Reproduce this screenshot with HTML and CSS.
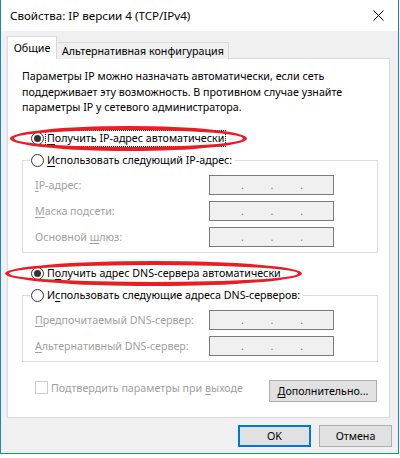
FILE: index.html
```html
<!DOCTYPE html>
<html>

<head>
    <title>Свойства: IP версии 4 (TCP/IPv4)</title>
    <link rel="stylesheet" href="styles.css">
</head>

<body>
    <div class="window">
        <div class="titlebar">
            <span class="title">Свойства: IP версии 4 (TCP/IPv4)</span>
            <svg class="close" width="11" height="11" viewBox="0 0 11 11">
                <path d="M0.5 0.5 L10.5 10.5 M10.5 0.5 L0.5 10.5" stroke="#000" stroke-width="1" fill="none" />
            </svg>
        </div>

        <div class="client">
            <div class="tabs">
                <div class="tab active">Общие</div>
                <div class="tab">Альтернативная конфигурация</div>
            </div>

            <div class="panel">
                <p class="intro">Параметры IP можно назначать автоматически, если сеть поддерживает эту возможность. В противном случае узнайте параметры IP у сетевого администратора.</p>

                <div class="radio-row">
                    <span class="radio checked"></span>
                    <span class="label focused"><u>П</u>олучить IP-адрес автоматически</span>
                </div>

                <fieldset class="group">
                    <legend class="radio-row">
                        <span class="radio"></span>
                        <span class="label"><u>И</u>спользовать следующий IP-адрес:</span>
                    </legend>
                    <div class="field">
                        <span class="field-label"><u>I</u>P-адрес:</span>
                        <span class="ip-box"><span>.</span><span>.</span><span>.</span></span>
                    </div>
                    <div class="field">
                        <span class="field-label"><u>М</u>аска подсети:</span>
                        <span class="ip-box"><span>.</span><span>.</span><span>.</span></span>
                    </div>
                    <div class="field">
                        <span class="field-label">Основной <u>ш</u>люз:</span>
                        <span class="ip-box"><span>.</span><span>.</span><span>.</span></span>
                    </div>
                </fieldset>

                <div class="radio-row dns-auto">
                    <span class="radio checked"></span>
                    <span class="label">П<u>о</u>лучить адрес DNS-сервера автоматически</span>
                </div>

                <fieldset class="group">
                    <legend class="radio-row">
                        <span class="radio"></span>
                        <span class="label">И<u>с</u>пользовать следующие адреса DNS-серверов:</span>
                    </legend>
                    <div class="field">
                        <span class="field-label"><u>П</u>редпочитаемый DNS-сервер:</span>
                        <span class="ip-box"><span>.</span><span>.</span><span>.</span></span>
                    </div>
                    <div class="field">
                        <span class="field-label"><u>А</u>льтернативный DNS-сервер:</span>
                        <span class="ip-box"><span>.</span><span>.</span><span>.</span></span>
                    </div>
                </fieldset>

                <div class="panel-footer">
                    <div class="check-row">
                        <span class="checkbox"></span>
                        <span class="check-label">Подтвердить параметры при <u>в</u>ыходе</span>
                    </div>
                    <button type="button" class="btn advanced"><u>Д</u>ополнительно...</button>
                </div>
            </div>

            <div class="dialog-buttons">
                <button type="button" class="btn default">OK</button>
                <button type="button" class="btn">Отмена</button>
            </div>
        </div>

        <!-- red marks drawn over the screenshot -->
        <div class="mark mark-ip"></div>
        <div class="mark mark-dns"></div>
    </div>
</body>

</html>
```

FILE: styles.css
```css
body {
    margin: 0;
    padding: 0;
    background-color: #ffffff;
    font-family: "Noto Sans", "Open Sans", sans-serif;
    font-size: 10.7px;
    color: #000000;
}

u {
    text-decoration-thickness: 1px;
    text-underline-offset: 2px;
}

.window {
    position: relative;
    width: 397px;
    height: 453px;
    border: 1px solid #1883d7;
    border-top: none;
    background-color: #f0f0f0;
}

.titlebar {
    height: 31px;
    background-color: #ffffff;
    display: flex;
    align-items: center;
    justify-content: space-between;
    padding: 0 9px 0 9px;
}

.title {
    font-size: 11.6px;
}

.close {
    margin-right: 5px;
}

.client {
    padding: 6px 6px 0 6px;
}

.tabs {
    display: flex;
    align-items: flex-end;
    height: 22px;
    margin-bottom: -1px;
    position: relative;
}

.tab {
    height: 16px;
    line-height: 16px;
    padding: 0 4px 0 5px;
    border: 1px solid #d9d9d9;
    border-bottom: none;
    border-left: none;
    background-color: #f0f0f0;
}

.tab.active {
    height: 22px;
    line-height: 22px;
    width: 48px;
    padding: 0;
    text-align: center;
    border-left: 1px solid #d9d9d9;
    background-color: #ffffff;
}

.panel {
    width: 356px;
    background-color: #ffffff;
    border: 1px solid #d9d9d9;
    padding: 0 11px 15px 14px;
}

.intro {
    margin: 10px 0 0 0;
    line-height: 15.5px;
    padding-right: 20px;
}

.radio-row {
    display: flex;
    align-items: center;
    height: 22px;
    padding-left: 9px;
}

.intro + .radio-row {
    margin-top: 12px;
}

.radio {
    width: 11px;
    height: 11px;
    border: 1px solid #333333;
    border-radius: 50%;
    background-color: #ffffff;
    display: flex;
    align-items: center;
    justify-content: center;
    flex-shrink: 0;
}

.radio.checked::after {
    content: "";
    width: 7px;
    height: 7px;
    border-radius: 50%;
    background-color: #333333;
}

.label {
    margin-left: 2px;
    padding: 0 1px;
    line-height: 15px;
}

.label.focused {
    outline: 1px dotted #000000;
    outline-offset: 0;
}

.group {
    margin: 0;
    padding: 0 0 5px 12px;
    border: 1px solid #dcdcdc;
}

.group legend {
    padding: 0 2px 0 1px;
    margin-left: -5px;
}

.field {
    display: flex;
    align-items: center;
    height: 20px;
    margin-top: 6px;
}

.group legend + .field {
    margin-top: 3px;
}

.field-label {
    width: 174px;
    color: #a0a0a0;
}

.ip-box {
    box-sizing: border-box;
    width: 125px;
    height: 20px;
    border: 1px solid #7a7a7a;
    background-color: #f0f0f0;
    display: flex;
    justify-content: space-between;
    align-items: flex-end;
    padding: 0 30px 3px 31px;
    color: #7a7a8a;
    line-height: 12px;
}

.dns-auto {
    margin-top: 10px;
}

.panel-footer {
    display: flex;
    justify-content: space-between;
    margin-top: 18px;
    padding-right: 1px;
}

.check-row {
    display: flex;
    align-items: center;
    height: 14px;
    padding-left: 13px;
    margin-top: 1px;
}

.checkbox {
    width: 11px;
    height: 11px;
    border: 1px solid #cccccc;
    background-color: #ffffff;
}

.check-label {
    margin-left: 3px;
    color: #a0a0a0;
}

.btn {
    font-family: "Noto Sans", "Open Sans", sans-serif;
    font-size: 10.7px;
    color: #000000;
    background-color: #e1e1e1;
    border: 1px solid #adadad;
    border-radius: 0;
    height: 22px;
    padding: 0;
    cursor: pointer;
}

.advanced {
    width: 108px;
}

.dialog-buttons {
    display: flex;
    justify-content: flex-end;
    gap: 8px;
    margin-top: 7px;
}

.dialog-buttons .btn {
    width: 73px;
}

.btn.default {
    border: 2px solid #0078d7;
}

.mark {
    position: absolute;
    border: 4px solid #ec1c24;
    border-radius: 50%;
}

.mark-ip {
    left: 9px;
    top: 126px;
    width: 229px;
    height: 17px;
}

.mark-dns {
    left: 4px;
    top: 261px;
    width: 289px;
    height: 17px;
}
```
